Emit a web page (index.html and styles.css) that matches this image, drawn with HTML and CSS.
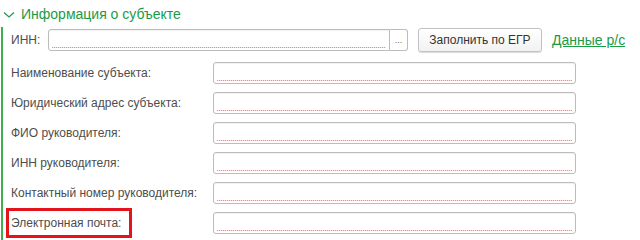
FILE: index.html
```html
<!DOCTYPE html>
<html lang="ru">

<head>
  <meta charset="UTF-8">
  <title>Информация о субъекте</title>
  <link rel="stylesheet" href="styles.css">
</head>

<body>
  <div class="group">
    <div class="group-title">
      <svg class="chevron" width="12" height="8" viewBox="0 0 12 8">
        <path d="M1 1.5 L6 6 L11 1.5" fill="none" stroke="#1a9b48" stroke-width="1.2"/>
      </svg>
      <span>Информация о субъекте</span>
    </div>

    <div class="group-body">
      <div class="inn-row">
        <label class="inn-label">ИНН:</label>
        <div class="field field-inn">
          <div class="input"></div>
          <div class="choice">...</div>
        </div>
        <button class="button">Заполнить по ЕГР</button>
        <a class="link" href="#">Данные р/с</a>
      </div>

      <div class="form">
        <label class="label">Наименование субъекта:</label>
        <div class="input"></div>
        <label class="label">Юридический адрес субъекта:</label>
        <div class="input"></div>
        <label class="label">ФИО руководителя:</label>
        <div class="input"></div>
        <label class="label">ИНН руководителя:</label>
        <div class="input"></div>
        <label class="label">Контактный номер руководителя:</label>
        <div class="input"></div>
        <label class="label marked">Электронная почта:</label>
        <div class="input"></div>
      </div>
    </div>
  </div>
</body>

</html>
```

FILE: styles.css
```css
body {
  margin: 0;
  background: #fff;
  font-family: "Liberation Sans", Arial, sans-serif;
  font-size: 12px;
  color: #4d4d4d;
}

.group-title {
  height: 27px;
  display: flex;
  align-items: center;
  color: #1a9b48;
  font-size: 14px;
  padding-left: 3px;
  padding-top: 1px;
  box-sizing: border-box;
}

.chevron {
  margin-right: 6px;
  margin-top: 2px;
}

.group-body {
  margin-left: 1px;
  border-left: 2px solid #3fae4f;
  padding-left: 8px;
  height: 213px;
}

.inn-row {
  display: flex;
  align-items: center;
  height: 24px;
  padding-top: 1px;
}

.inn-label {
  width: 37px;
}

.field-inn {
  display: flex;
  width: 360px;
}

.input {
  position: relative;
  height: 22px;
  box-sizing: border-box;
  border: 1px solid #bcbcbc;
  border-radius: 3px;
  background: #fff;
  box-shadow: inset 0 1px 1px rgba(0, 0, 0, 0.06);
}

.input::after {
  content: "";
  position: absolute;
  left: 3px;
  right: 3px;
  bottom: 2px;
  height: 1px;
  background: repeating-linear-gradient(90deg, #f58a8a 0 1px, #fcdcdc 1px 2px);
}

.field-inn .input {
  flex: 1;
  border-radius: 3px 0 0 3px;
}

.choice {
  width: 18px;
  height: 22px;
  box-sizing: border-box;
  border: 1px solid #bcbcbc;
  border-left: none;
  border-radius: 0 3px 3px 0;
  font-size: 9px;
  color: #666;
  text-align: center;
  line-height: 20px;
}

.button {
  margin-left: 10px;
  width: 124px;
  height: 24px;
  border: 1px solid #c2c2c2;
  border-radius: 3px;
  background: linear-gradient(#ffffff, #f2f2f2);
  box-shadow: 0 1px 1px rgba(0, 0, 0, 0.15);
  font-family: inherit;
  font-size: 12px;
  color: #333;
  padding: 0;
}

.link {
  margin-left: 10px;
  color: #1a9b48;
  font-size: 14px;
  text-decoration: underline;
}

.form {
  display: grid;
  grid-template-columns: 202px 363px;
  row-gap: 8px;
  align-items: center;
  margin-top: 10px;
}

.label {
  position: relative;
}

.marked::after {
  content: "";
  position: absolute;
  left: -5px;
  top: -8px;
  width: 126px;
  height: 30px;
  box-sizing: border-box;
  border: 3px solid #e3141b;
}
```
